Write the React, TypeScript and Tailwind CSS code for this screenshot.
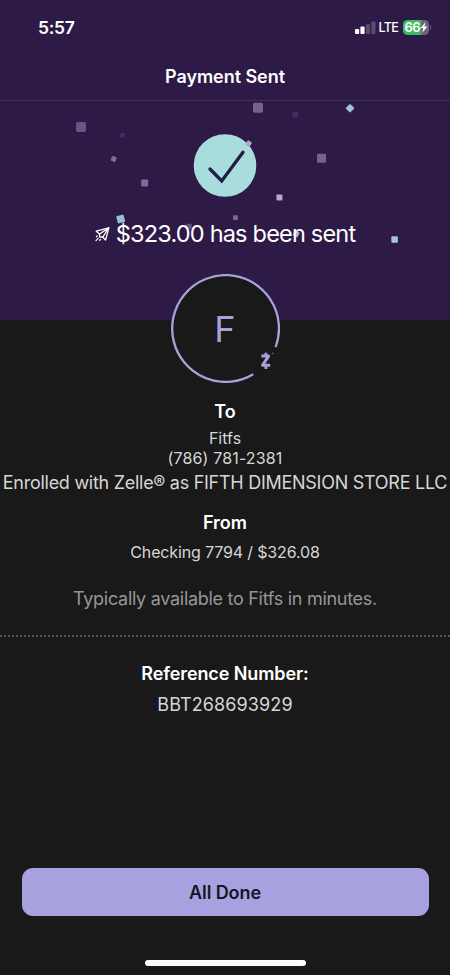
import React from 'react';

interface Confetti {
  x: number;
  y: number;
  size: number;
  color: string;
  rotate?: number;
}

// x / y are the centre of each piece inside the hero
const confetti: Confetti[] = [
  { x: 81, y: 26, size: 10, color: '#6b5584' },
  { x: 122.3, y: 34.3, size: 4.5, color: '#442e68' },
  { x: 113.7, y: 58, size: 5, color: '#7f6b99', rotate: 25 },
  { x: 144.7, y: 82, size: 7, color: '#7f6a9a' },
  { x: 120.7, y: 118, size: 7.5, color: '#9dbdd0', rotate: -15 },
  { x: 189, y: 125.5, size: 5.5, color: '#655080' },
  { x: 258, y: 6.7, size: 10, color: '#76618c' },
  { x: 295.3, y: 13.3, size: 5.5, color: '#442e68' },
  { x: 350, y: 7.3, size: 6.4, color: '#a0c6d2', rotate: 45 },
  { x: 248.7, y: 42.5, size: 5, color: '#b5a5cf', rotate: 35 },
  { x: 321.5, y: 57.3, size: 9, color: '#77618c' },
  { x: 279.4, y: 96.6, size: 6, color: '#b9a9c9' },
  { x: 235.4, y: 116.6, size: 4.8, color: '#7a6595' },
  { x: 296.2, y: 132.8, size: 5.5, color: '#b7aadb', rotate: 30 },
  { x: 394.6, y: 138.5, size: 6.5, color: '#a0c6d8' },
];

const StatusBar: React.FC = () => (
  <div className="flex h-[54px] items-center justify-between pr-[19px] pl-[38px]">
    <span className="pt-[2px] text-[17.5px] font-semibold tracking-[-0.3px]">5:57</span>
    <div className="flex items-center pt-px">
      <svg width="21" height="14" viewBox="0 0 21 14" fill="#fff">
        <rect x="0" y="8" width="4.2" height="5" rx="1" />
        <rect x="5.4" y="5.6" width="4.2" height="7.4" rx="1" />
        <rect x="10.9" y="3.2" width="4.2" height="9.8" rx="1" opacity="0.22" />
        <rect x="16.3" y="0.5" width="4.2" height="12.5" rx="1" opacity="0.22" />
      </svg>
      <span className="ml-[3px] w-[20px] pt-px text-[12.5px] font-medium tracking-[-0.6px]">LTE</span>
      <div className="ml-[4px] flex h-[15px] w-[26px] items-center overflow-hidden rounded-[4.5px] bg-[linear-gradient(90deg,#3dbb5e_68%,#6f617f_68%)] pl-[2px]">
        <span className="text-[13px] leading-none font-semibold tracking-[-0.6px]">66</span>
        <svg className="shrink-0" width="8" height="11" viewBox="0 0 8 11" fill="#fff">
          <path d="M5.3 0.3 0.4 6.3h2.8L2.4 10.7 7.4 4.6H4.5z" />
        </svg>
      </div>
      <span className="ml-[1px] h-[5px] w-[1.5px] rounded-r-full bg-[#6f617f]" />
    </div>
  </div>
);

const PlaneIcon: React.FC = () => (
  <svg width="15" height="15" viewBox="0 0 15 15" fill="none" stroke="#fff" strokeWidth="1.3" strokeLinejoin="round" strokeLinecap="round">
    <path d="M13.8 0.9 1.2 4.2 4.6 7M13.8 0.9 10.6 13 7.8 10.2" />
    <path d="M13.8 0.9 4.6 7v3h3.2z" />
    <path d="M2.2 9 1.4 9.8M3.2 11.4 1 13.6M5.6 12.4 4.8 13.2" />
  </svg>
);

const Hero: React.FC = () => (
  <section className="relative h-[219px] pt-[33px]">
    <svg className="mx-auto" width="64" height="64" viewBox="0 0 64 64" fill="none">
      <circle cx="32" cy="31.5" r="31.3" fill="#a9dcdc" />
      <path d="M17 35 28.7 47 50 18.3" stroke="#211d45" strokeWidth="3.3" strokeLinecap="round" />
    </svg>
    <svg className="absolute top-0 left-0" width="450" height="219">
      {confetti.map((c, i) => (
        <rect
          key={i}
          x={c.x - c.size / 2}
          y={c.y - c.size / 2}
          width={c.size}
          height={c.size}
          rx={c.size > 9 ? 1.8 : 1}
          fill={c.color}
          transform={`rotate(${c.rotate ?? 0} ${c.x} ${c.y})`}
        />
      ))}
    </svg>
    <div className="relative mt-[20px] flex h-8 items-center justify-center gap-[6px]">
      <PlaneIcon />
      <h1 className="text-[23.5px] tracking-[-0.8px] whitespace-nowrap">$323.00 has been sent</h1>
    </div>
  </section>
);

const Avatar: React.FC = () => (
  <div className="relative mx-auto -mt-[46px] flex size-[109px] items-center justify-center rounded-full bg-[#191919]">
    <svg className="absolute inset-0" width="109" height="109" viewBox="0 0 109 109" fill="none" stroke="#a9a1dc">
      <path d="M104.6 73.2A53.4 53.4 0 1 0 82.2 100.2" strokeWidth="2.3" />
      <path d="M90.4 82.1H97.6L91.6 91.2H99.2" strokeWidth="3" strokeLinejoin="round" />
      <path d="M94.9 78.8v3.5M94.9 91v4" strokeWidth="2.8" />
      <circle cx="101.7" cy="79.3" r="0.5" strokeWidth="0.5" />
    </svg>
    <span className="text-[36px] leading-none font-normal text-[#a9a1dc]">F</span>
  </div>
);

const App: React.FC = () => {
  return (
    <div className="flex h-[975px] w-[450px] flex-col overflow-hidden bg-[#191919] font-['Inter','Liberation_Sans',sans-serif] text-white">
      <div className="bg-[#2e1a47]">
        <StatusBar />
        <header className="flex h-[47px] items-center justify-center border-b border-[#412f58] pb-[2px] text-[18px] font-semibold tracking-[-0.05px]">
          Payment Sent
        </header>
        <Hero />
      </div>

      <Avatar />

      <main className="flex flex-col items-center text-center whitespace-nowrap text-[#d6d6d6]">
        <h2 className="mt-[17px] h-6 text-[18px] leading-6 font-semibold text-white">To</h2>
        <p className="mt-[4px] h-5 text-[16px] leading-5">Fitfs</p>
        <p className="h-5 text-[16px] leading-5 tracking-[0.15px]">(786) 781-2381</p>
        <p className="mt-[3px] h-6 text-[18px] leading-6 tracking-[-0.27px]">Enrolled with Zelle® as FIFTH DIMENSION STORE LLC</p>
        <h2 className="mt-4 h-6 text-[18px] leading-6 font-semibold text-white">From</h2>
        <p className="mt-[7px] h-5 text-[16px] leading-5 tracking-[-0.15px]">Checking 7794 / $326.08</p>
        <p className="mt-[25px] h-6 text-[18px] leading-6 tracking-[-0.29px] text-[#969696]">Typically available to Fitfs in minutes.</p>
        <div className="mt-[24px] h-[2px] w-full bg-[repeating-linear-gradient(90deg,#555_0_2px,transparent_2px_4px)]" />
        <h2 className="mt-[25px] h-6 text-[18px] leading-6 font-semibold tracking-[-0.1px] text-white">Reference Number:</h2>
        <p className="mt-[7px] h-6 text-[18px] leading-6 tracking-[0.1px]">BBT268693929</p>
      </main>

      <footer className="mt-auto flex flex-col items-center pb-[9px]">
        <button className="h-12 w-[407px] rounded-[11px] bg-[#a7a2df] text-[18px] font-semibold tracking-[-0.1px] text-[#161426]">
          All Done
        </button>
        <div className="mt-[44px] h-[6px] w-[161px] rounded-full bg-white" />
      </footer>
    </div>
  );
};

export default App;
